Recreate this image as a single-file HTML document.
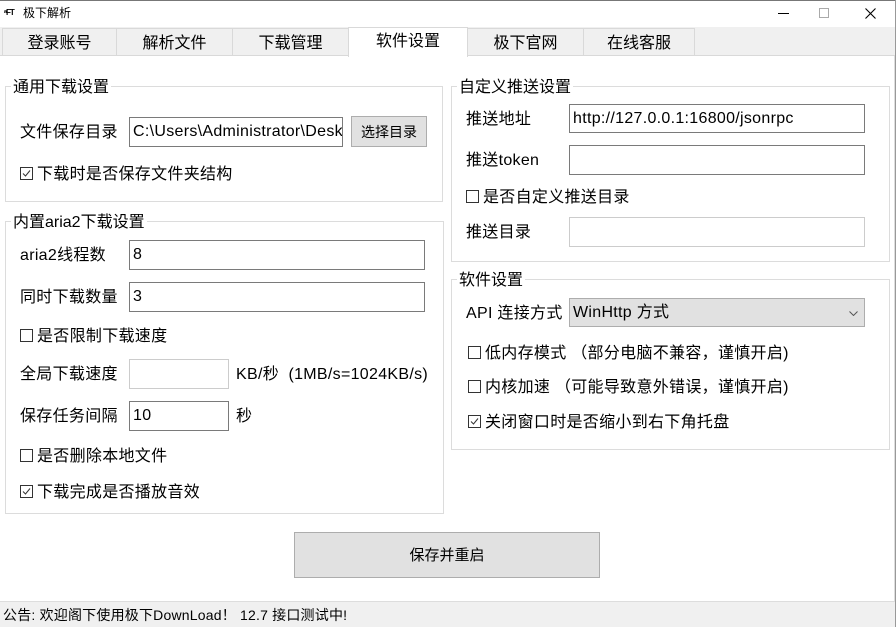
<!DOCTYPE html>
<html><head><meta charset="utf-8"><style>
*{margin:0;padding:0;box-sizing:border-box}
body{width:896px;height:627px;position:relative;background:#fff;font-family:"Liberation Sans","Noto Sans CJK SC",sans-serif;font-size:16px;color:#000;overflow:hidden}
.a{position:absolute;white-space:nowrap}
.tab{position:absolute;top:28px;height:28px;border:1px solid #d9d9d9;background:#f0f0f0;text-align:center;line-height:29px;font-size:16px}
.grp{position:absolute;border:1px solid #dcdcdc}
.gl{position:absolute;background:#fff;padding:0 2px;font-size:16px;line-height:18px}
.in{position:absolute;border:1px solid #7a7a7a;background:#fff;padding-left:3px;line-height:28px;font-size:16px;letter-spacing:0.3px}
.lb{position:absolute;line-height:20px;font-size:16px;margin-top:1px;letter-spacing:0.3px}
.cb{display:inline-block;width:13px;height:13px;vertical-align:-1px;margin-right:4px}
</style></head><body>
<div class="a" style="left:0;top:0;width:896px;height:1px;background:#777"></div>
<div class="a" style="right:0;top:0;width:1px;height:627px;background:#999"></div>
<div class="a" style="left:4px;top:8px;font-size:8px;font-weight:bold;letter-spacing:-1px">ᵃFT</div>
<div class="a" style="left:23px;top:5px;font-size:12px;line-height:16px">极下解析</div>
<div class="a" style="left:778px;top:13px;width:11px;height:1px;background:#000"></div>
<div class="a" style="left:819px;top:8px;width:10px;height:10px;border:1px solid #aaa"></div>
<svg class="a" style="left:865px;top:8px" width="11" height="11"><path d="M0.5 0.5L10.5 10.5M10.5 0.5L0.5 10.5" stroke="#000" stroke-width="1.1"/></svg>
<div class="a" style="left:0;top:27px;width:895px;height:29px;background:#f0f0f0"></div>
<div class="a" style="left:0;top:55px;width:895px;height:1px;background:#d9d9d9"></div>
<div class="tab" style="left:2px;width:115px">登录账号</div>
<div class="tab" style="left:116px;width:117px">解析文件</div>
<div class="tab" style="left:232px;width:117px">下载管理</div>
<div class="tab" style="left:348px;width:120px;top:27px;height:30px;background:#fff;border-bottom:none;line-height:28px">软件设置</div>
<div class="tab" style="left:467px;width:117px">极下官网</div>
<div class="tab" style="left:583px;width:112px">在线客服</div>
<div class="a" style="left:894px;top:56px;width:1px;height:545px;background:#ddd"></div>

<div class="grp" style="left:5px;top:86px;width:438px;height:116px"></div>
<div class="gl" style="left:11px;top:79px">通用下载设置</div>
<div class="lb" style="left:20px;top:122px">文件保存目录</div>
<div class="in" style="left:129px;top:117px;width:214px;height:30px;overflow:hidden">C:\Users\Administrator\Desktop</div>
<div class="a" style="left:351px;top:116px;width:76px;height:31px;background:#e1e1e1;border:1px solid #adadad;text-align:center;line-height:30px;font-size:14px">选择目录</div>
<div class="lb" style="left:20px;top:164px"><svg class="cb"><rect x="0.5" y="0.5" width="12" height="12" fill="none" stroke="#333"/><path d="M3 6.5L5.5 9L10 3.5" fill="none" stroke="#333"/></svg>下载时是否保存文件夹结构</div>

<div class="grp" style="left:5px;top:221px;width:439px;height:293px"></div>
<div class="gl" style="left:11px;top:214px">内置aria2下载设置</div>
<div class="lb" style="left:20px;top:245px">aria2线程数</div>
<div class="in" style="left:129px;top:240px;width:296px;height:30px">8</div>
<div class="lb" style="left:20px;top:287px">同时下载数量</div>
<div class="in" style="left:129px;top:282px;width:296px;height:30px">3</div>
<div class="lb" style="left:20px;top:326px"><svg class="cb"><rect x="0.5" y="0.5" width="12" height="12" fill="none" stroke="#333"/></svg>是否限制下载速度</div>
<div class="lb" style="left:20px;top:364px">全局下载速度</div>
<div class="in" style="left:129px;top:359px;width:100px;height:30px;border-color:#ccc"></div>
<div class="lb" style="left:236px;top:364px">KB/秒&nbsp;&nbsp;(1MB/s=1024KB/s)</div>
<div class="lb" style="left:20px;top:406px">保存任务间隔</div>
<div class="in" style="left:129px;top:401px;width:100px;height:30px">10</div>
<div class="lb" style="left:236px;top:406px">秒</div>
<div class="lb" style="left:20px;top:446px"><svg class="cb"><rect x="0.5" y="0.5" width="12" height="12" fill="none" stroke="#333"/></svg>是否删除本地文件</div>
<div class="lb" style="left:20px;top:482px"><svg class="cb"><rect x="0.5" y="0.5" width="12" height="12" fill="none" stroke="#333"/><path d="M3 6.5L5.5 9L10 3.5" fill="none" stroke="#333"/></svg>下载完成是否播放音效</div>

<div class="grp" style="left:451px;top:86px;width:439px;height:176px"></div>
<div class="gl" style="left:457px;top:79px">自定义推送设置</div>
<div class="lb" style="left:466px;top:109px">推送地址</div>
<div class="in" style="left:569px;top:104px;width:296px;height:29px">http://127.0.0.1:16800/jsonrpc</div>
<div class="lb" style="left:466px;top:150px">推送token</div>
<div class="in" style="left:569px;top:145px;width:296px;height:30px"></div>
<div class="lb" style="left:466px;top:187px"><svg class="cb"><rect x="0.5" y="0.5" width="12" height="12" fill="none" stroke="#333"/></svg>是否自定义推送目录</div>
<div class="lb" style="left:466px;top:222px">推送目录</div>
<div class="in" style="left:569px;top:217px;width:296px;height:30px;border-color:#ccc"></div>

<div class="grp" style="left:451px;top:279px;width:439px;height:171px"></div>
<div class="gl" style="left:457px;top:272px">软件设置</div>
<div class="lb" style="left:466px;top:303px">API 连接方式</div>
<div class="in" style="left:569px;top:298px;width:296px;height:29px;background:#e1e1e1;border-color:#adadad">WinHttp 方式<svg style="position:absolute;right:6px;top:12px" width="9" height="5"><path d="M0.5 0.5L4.5 4.5L8.5 0.5" fill="none" stroke="#555"/></svg></div>
<div class="lb" style="left:468px;top:343px"><svg class="cb"><rect x="0.5" y="0.5" width="12" height="12" fill="none" stroke="#333"/></svg>低内存模式 （部分电脑不兼容，谨慎开启)</div>
<div class="lb" style="left:468px;top:377px"><svg class="cb"><rect x="0.5" y="0.5" width="12" height="12" fill="none" stroke="#333"/></svg>内核加速 （可能导致意外错误，谨慎开启)</div>
<div class="lb" style="left:468px;top:412px"><svg class="cb"><rect x="0.5" y="0.5" width="12" height="12" fill="none" stroke="#333"/><path d="M3 6.5L5.5 9L10 3.5" fill="none" stroke="#333"/></svg>关闭窗口时是否缩小到右下角托盘</div>

<div class="a" style="left:294px;top:532px;width:306px;height:46px;background:#e1e1e1;border:1px solid #adadad;text-align:center;line-height:45px;font-size:15px">保存并重启</div>

<div class="a" style="left:0;top:601px;width:895px;height:26px;background:#f0f0f0;border-top:1px solid #ddd"></div>
<div class="a" style="left:3px;top:606px;font-size:14px;line-height:18px;letter-spacing:0.2px">公告: 欢迎阁下使用极下DownLoad！ 12.7 接口测试中!</div>
</body></html>
